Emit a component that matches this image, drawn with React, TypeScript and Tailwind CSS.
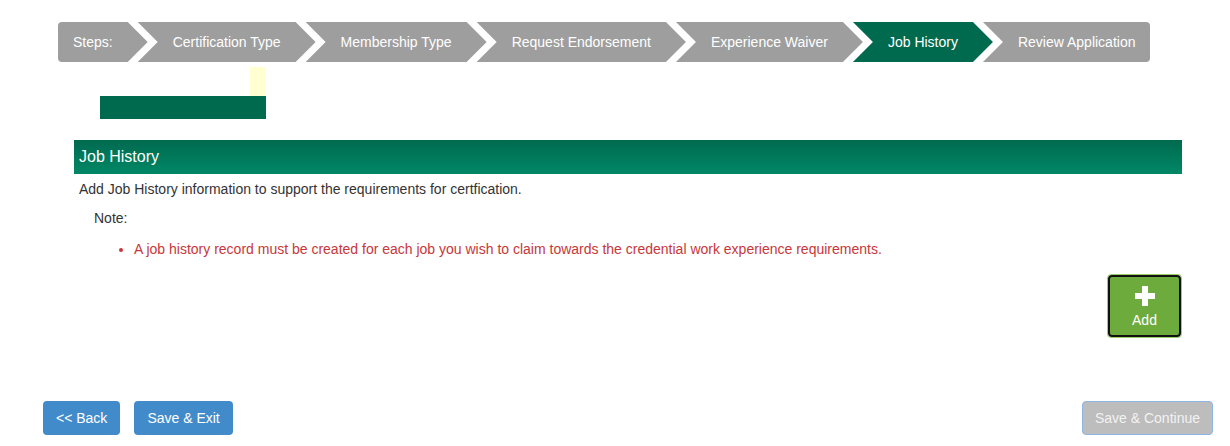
import React from "react";

const steps = [
  { label: "Steps:", kind: "first" },
  { label: "Certification Type", kind: "mid" },
  { label: "Membership Type", kind: "mid" },
  { label: "Request Endorsement", kind: "mid" },
  { label: "Experience Waiver", kind: "mid" },
  { label: "Job History", kind: "active" },
  { label: "Review Application", kind: "last" },
];

function Step({ label, kind }: { label: string; kind: string }) {
  if (kind === "first") {
    return (
      <div
        className="h-[40px] flex items-center pl-[15px] pr-[35px] bg-[#9e9e9e] text-white rounded-l-[4px] [clip-path:polygon(0_0,calc(100%-20px)_0,100%_50%,calc(100%-20px)_100%,0_100%)]"
      >
        {label}
      </div>
    );
  }
  if (kind === "last") {
    return (
      <div className="h-[40px] flex items-center pl-[35px] pr-[15px] bg-[#9e9e9e] text-white rounded-r-[4px] -ml-[10px] [clip-path:polygon(0_0,100%_0,100%_100%,0_100%,20px_50%)]">
        {label}
      </div>
    );
  }
  const bg = kind === "active" ? "bg-[#006a4f]" : "bg-[#9e9e9e]";
  return (
    <div
      className={`h-[40px] flex items-center pl-[35px] pr-[35px] ${bg} text-white -ml-[10px] [clip-path:polygon(0_0,calc(100%-20px)_0,100%_50%,calc(100%-20px)_100%,0_100%,20px_50%)]`}
    >
      {label}
    </div>
  );
}

export default function App() {
  return (
    <div className="w-[1230px] h-[446px] bg-white text-[14px] text-[#333] font-['Liberation_Sans',Arial,sans-serif] overflow-hidden">
      <div className="pt-[22px] pl-[58px] flex">
        {steps.map((s) => (
          <Step key={s.label} label={s.label} kind={s.kind} />
        ))}
      </div>

      <div className="mt-[5px] pl-[250px]">
        <div className="w-[16px] h-[29px] bg-[#ffffd2]" />
      </div>
      <div className="pl-[100px]">
        <div className="w-[166px] h-[23px] bg-[#006a4f]" />
      </div>

      <div className="mt-[21px] ml-[74px] w-[1108px]">
        <div className="h-[34px] flex items-center pl-[5px] text-white text-[16px] bg-gradient-to-b from-[#006a4f] to-[#008866]">
          Job History
        </div>
        <div className="mt-[5px] pl-[5px] leading-[20px]">
          Add Job History information to support the requirements for certfication.
        </div>
        <div className="mt-[9px] pl-[20px] leading-[20px]">Note:</div>
        <ul className="mt-[11px] pl-[60px] list-disc leading-[20px] text-[#c7373a]">
          <li>
            A job history record must be created for each job you wish to claim towards the credential work experience requirements.
          </li>
        </ul>
        <div className="mt-[15px] flex justify-end">
          <div className="w-[75px] h-[64px] rounded-[4px] border border-[#9bd067] p-0">
            <button className="w-full h-full rounded-[4px] border-2 border-[#111] bg-[#6dab3c] text-white flex flex-col items-center justify-center">
              <svg width="20" height="20" viewBox="0 0 20 20" className="mt-[2px]">
                <path d="M7 0h6v7h7v6h-7v7H7v-7H0V7h7z" fill="#fff" />
              </svg>
              <span className="mt-[5px] leading-[18px]">Add</span>
            </button>
          </div>
        </div>
      </div>

      <div className="mt-[63px] flex items-center pl-[43px] pr-[17px]">
        <button className="h-[34px] px-[13px] rounded-[4px] bg-[#428bca] text-white">&lt;&lt; Back</button>
        <button className="ml-[14px] h-[34px] px-[13px] rounded-[4px] bg-[#428bca] text-white">Save &amp; Exit</button>
        <div className="flex-1" />
        <button className="h-[34px] px-[12px] rounded-[4px] bg-[#bdbdbd] border border-[#8db6e2] text-[#f2f2f2]">
          Save &amp; Continue
        </button>
      </div>
    </div>
  );
}
